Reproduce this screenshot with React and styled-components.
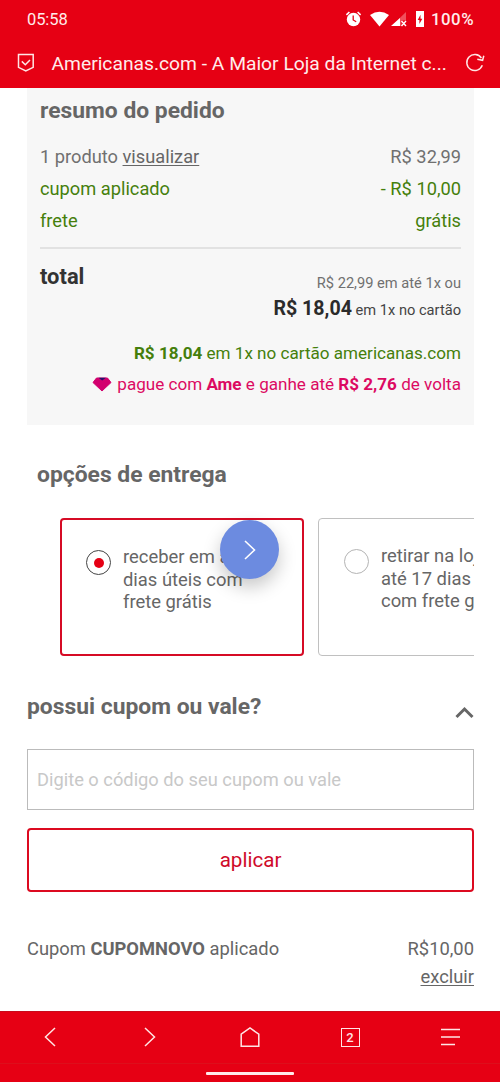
import React, { useState } from 'react';
import styled, { createGlobalStyle } from 'styled-components';

const GlobalStyle = createGlobalStyle`
  * {
    box-sizing: border-box;
  }

  body {
    margin: 0;
    background: #fff;
    color: #666;
    font-family: Roboto, 'Liberation Sans', sans-serif;
    font-size: 18.25px;
  }
`;

const Screen = styled.div`
  display: flex;
  flex-direction: column;
  width: 500px;
  height: 1082px;
  overflow: hidden;
`;

const Header = styled.header`
  flex: none;
  height: 88px;
  background: #e60014;
  color: #ffeceb;
`;

const StatusBar = styled.div`
  display: flex;
  align-items: center;
  justify-content: space-between;
  height: 38px;
  padding: 0 26px 0 27px;
  font-size: 16.5px;
`;

const Clock = styled.span`
  letter-spacing: -0.1px;
`;

const StatusIcons = styled.div`
  display: flex;
  align-items: center;
`;

const Battery = styled.span`
  margin-left: 6px;
  font-size: 16.8px;
  font-weight: 500;
  letter-spacing: 0.5px;
`;

const TitleBar = styled.div`
  display: flex;
  align-items: center;
  height: 50px;
  padding: 0 15px 0 17px;
`;

const PageTitle = styled.div`
  flex: 1;
  margin-left: 16.5px;
  font-size: 19.25px;
  white-space: nowrap;
`;

const Content = styled.main`
  flex: 1;
  padding: 0 26px 0 27px;
`;

const Summary = styled.section`
  height: 337px;
  padding: 7px 13px 0;
  background: #f7f7f7;
`;

const Heading = styled.h2`
  margin: 0;
  font-size: 22.85px;
  line-height: 32px;
  font-weight: 700;
`;

const SummaryRows = styled.div`
  margin-top: 14px;
  padding-bottom: 10px;
  border-bottom: 2px solid #e2e2e2;
`;

const SummaryRow = styled.div`
  display: flex;
  justify-content: space-between;
  line-height: 32px;
  color: ${(p) => (p.$discount ? '#457f0c' : '#707070')};
`;

const Underlined = styled.a`
  color: #666;
  text-decoration: underline;
  text-underline-offset: 2px;
  text-decoration-thickness: 1px;
`;

const TotalRow = styled.div`
  display: flex;
  justify-content: space-between;
  padding-top: 12px;
`;

const TotalLabel = styled.div`
  font-size: 21.9px;
  line-height: 32px;
  font-weight: 700;
  color: #333;
`;

const TotalValues = styled.div`
  padding-top: 10px;
  text-align: right;
`;

const FullPrice = styled.div`
  font-size: 14.65px;
  line-height: 25px;
  color: #707070;
`;

const CashPrice = styled.div`
  font-size: 14.65px;
  line-height: 26px;
  color: #444;

  strong {
    font-size: 19.6px;
    font-weight: 700;
    color: #2b2b2b;
  }
`;

const Offer = styled.div`
  display: flex;
  align-items: center;
  justify-content: flex-end;
  height: 31px;
  margin-top: ${(p) => p.$top || 0}px;
  font-size: 17.08px;
  white-space: pre;
  color: ${(p) => p.$color};

  strong {
    font-weight: 700;
  }

  svg {
    margin-right: 5px;
  }
`;

const Delivery = styled.section`
  padding-top: 34px;

  ${Heading} {
    padding-left: 10px;
  }
`;

const DeliveryTrack = styled.div`
  position: relative;
  display: flex;
  gap: 14px;
  margin-top: 27px;
  padding-left: 33px;
  overflow: hidden;
`;

const DeliveryCard = styled.label`
  display: flex;
  flex: none;
  align-items: flex-start;
  width: 244px;
  height: 138px;
  padding: ${(p) => (p.$selected ? '26px 0 0 24px' : '26px 0 0 25px')};
  border: ${(p) => (p.$selected ? '2px solid #d60b25' : '1px solid #c0c0c0')};
  border-radius: 4px;
`;

const Radio = styled.span`
  display: flex;
  flex: none;
  align-items: center;
  justify-content: center;
  width: 25px;
  height: 25px;
  margin-top: 4px;
  border: 1px solid ${(p) => (p.$selected ? '#444' : '#b4b4b4')};
  border-radius: 50%;

  &::after {
    content: '';
    width: 10px;
    height: 10px;
    border-radius: 50%;
    background: ${(p) => (p.$selected ? '#e60014' : 'transparent')};
  }
`;

const DeliveryText = styled.span`
  margin-left: 12px;
  font-size: 18.4px;
  line-height: 22.7px;
  white-space: pre;
`;

const FloatingNext = styled.button`
  position: absolute;
  top: 520px;
  left: 220px;
  display: flex;
  align-items: center;
  justify-content: center;
  width: 59px;
  height: 59px;
  padding: 0;
  border: none;
  border-radius: 50%;
  background: #6c8be0;
  box-shadow: 0 8px 18px rgba(0, 0, 0, 0.22);
`;

const CouponHeader = styled.div`
  display: flex;
  justify-content: space-between;
  margin-top: 35px;

  svg {
    margin-top: 14px;
  }
`;

const CouponInput = styled.input`
  display: block;
  width: 100%;
  height: 61px;
  margin-top: 26px;
  padding: 0 9px;
  border: 1px solid #bbb;
  border-radius: 0;
  outline: none;
  font: inherit;
  font-size: 18.3px;
  color: #666;

  &::placeholder {
    color: #c8c8c8;
    opacity: 1;
  }
`;

const ApplyButton = styled.button`
  display: block;
  width: 100%;
  height: 64px;
  margin-top: 18px;
  border: 2px solid #dc0a20;
  border-radius: 4px;
  background: #fff;
  color: #cf0a2a;
  font-family: inherit;
  font-size: 20.6px;
`;

const AppliedCoupon = styled.div`
  display: flex;
  justify-content: space-between;
  margin-top: 43px;
  font-size: 18.35px;
  line-height: 28px;

  strong {
    font-weight: 700;
  }
`;

const AppliedValue = styled.div`
  text-align: right;

  a {
    display: block;
  }
`;

const BottomBar = styled.footer`
  flex: none;
  height: 71px;
  background: #e60014;
  border-top: 1px solid #c80b1b;
`;

const NavRow = styled.nav`
  display: grid;
  grid-template-columns: repeat(5, 1fr);
  place-items: center;
  height: 52px;
  padding-bottom: 1px;
  border-bottom: 1px solid #dd0f1c;
`;

const TabCount = styled.span`
  display: flex;
  align-items: center;
  justify-content: center;
  width: 19px;
  height: 19px;
  border: 1.5px solid #ffe5e5;
  color: #ffe5e5;
  font-size: 13px;
  font-weight: 500;
`;

const HomeHandle = styled.div`
  width: 88px;
  height: 3px;
  margin: 8px auto 0;
  border-radius: 1px;
  background: #ffeaea;
`;

const Icon = ({ w, h, children, ...rest }) => (
  <svg width={w} height={h} viewBox={`0 0 ${w} ${h}`} fill="none" {...rest}>
    {children}
  </svg>
);

const line = { stroke: '#ffe5e5', strokeWidth: 1.5 };

const StatusIconSet = () => (
  <Icon w={80} h={20}>
    {/* alarm */}
    <circle cx="8.5" cy="10.5" r="6.7" fill="#fff" />
    <path d="M1.4 5.8 4.4 3M15.6 5.8 12.6 3" stroke="#fff" strokeWidth="1.6" />
    <path d="M8.2 6.6V11l3 1.8" stroke="#e60014" strokeWidth="1.3" />
    {/* wifi */}
    <path d="M25 6.1Q34.5-.5 44 6.1L34.5 17.6Z" fill="#fff" />
    {/* mobile signal without data */}
    <path d="M61 3v8.5h-4.5V17H46.5Z" fill="#f0505c" />
    <path d="M55 9v8h-9Z" fill="#fff" />
    <path d="m56.5 12 4.5 5M61 12l-4.5 5" stroke="#fff" strokeWidth="1.4" />
    {/* charging battery */}
    <path d="M71 2h8v16h-8Z" fill="#fff" />
    <path d="M75.5 5.8 72.7 11h1.7v4l2.9-5.200h-1.800Z" fill="#e60014" />
  </Icon>
);

const App = () => {
  const [coupon, setCoupon] = useState('');
  const [delivery, setDelivery] = useState('receber');

  return (
    <Screen>
      <GlobalStyle />
      <Header>
        <StatusBar>
          <Clock>05:58</Clock>
          <StatusIcons>
            <StatusIconSet />
            <Battery>100%</Battery>
          </StatusIcons>
        </StatusBar>
        <TitleBar>
          <Icon w={18} h={20}>
            <path d="M1.5 1.5h14.7v12.8L8.8 18 1.5 14.3Z" {...line} />
            <path d="m4.8 8.4 3.5 3.3 4.7-4.7" {...line} />
          </Icon>
          <PageTitle>Americanas.com - A Maior Loja da Internet c...</PageTitle>
          <Icon w={20} h={20}>
            <path d="M17.3 12.3a8 8 0 1 1-.9-7.3" {...line} />
            <path d="M18.8 2.8 17.6 7.3 12.3 6.2" {...line} />
          </Icon>
        </TitleBar>
      </Header>

      <Content>
        <Summary>
          <Heading>resumo do pedido</Heading>
          <SummaryRows>
            <SummaryRow>
              <span>1 produto <Underlined>visualizar</Underlined></span>
              <span>R$ 32,99</span>
            </SummaryRow>
            <SummaryRow $discount>
              <span>cupom aplicado</span>
              <span>- R$ 10,00</span>
            </SummaryRow>
            <SummaryRow $discount>
              <span>frete</span>
              <span>grátis</span>
            </SummaryRow>
          </SummaryRows>
          <TotalRow>
            <TotalLabel>total</TotalLabel>
            <TotalValues>
              <FullPrice>R$ 22,99 em até 1x ou</FullPrice>
              <CashPrice><strong>R$ 18,04</strong> em 1x no cartão</CashPrice>
            </TotalValues>
          </TotalRow>
          <Offer $color="#457f0c" $top={14}>
            <strong>R$ 18,04</strong> em 1x no cartão americanas.com
          </Offer>
          <Offer $color="#dc0a62">
            <Icon w={20} h={18}>
              <path d="M4.5 3h11L19 7.500l-9 8.500L1 7.500Z" fill="#d2006e" stroke="#d2006e" strokeLinejoin="round" />
              <path d="M6.5 2.700h7.500L10.200 5.500Z" fill="#25106b" />
            </Icon>
            pague com <strong>Ame</strong> e ganhe até <strong>R$ 2,76</strong> de volta
          </Offer>
        </Summary>

        <Delivery>
          <Heading>opções de entrega</Heading>
          <DeliveryTrack>
            <DeliveryCard $selected onClick={() => setDelivery('receber')}>
              <Radio $selected={delivery === 'receber'} />
              <DeliveryText>{'receber em até 9\ndias úteis com\nfrete grátis'}</DeliveryText>
            </DeliveryCard>
            <DeliveryCard onClick={() => setDelivery('retirar')}>
              <Radio $selected={delivery === 'retirar'} />
              <DeliveryText>{'retirar na loja em\naté 17 dias úteis\ncom frete grátis'}</DeliveryText>
            </DeliveryCard>
          </DeliveryTrack>
        </Delivery>

        <CouponHeader>
          <Heading>possui cupom ou vale?</Heading>
          <Icon w={19} h={14}>
            <path d="m1.5 12 8-8 8 8" stroke="#666" strokeWidth="3" />
          </Icon>
        </CouponHeader>
        <CouponInput
          placeholder="Digite o código do seu cupom ou vale"
          value={coupon}
          onChange={(e) => setCoupon(e.target.value)}
        />
        <ApplyButton>aplicar</ApplyButton>
        <AppliedCoupon>
          <span>Cupom <strong>CUPOMNOVO</strong> aplicado</span>
          <AppliedValue>
            R$10,00
            <Underlined>excluir</Underlined>
          </AppliedValue>
        </AppliedCoupon>
      </Content>

      <FloatingNext aria-label="avançar">
        <Icon w={14} h={22}>
          <path d="m2 2 9.5 9L2 20" stroke="#fff" strokeWidth="1.6" />
        </Icon>
      </FloatingNext>

      <BottomBar>
        <NavRow>
          <Icon w={12} h={20}>
            <path d="M11 1 1.5 10 11 19" {...line} />
          </Icon>
          <Icon w={12} h={20}>
            <path d="m1 1 9.5 9L1 19" {...line} />
          </Icon>
          <Icon w={20} h={20}>
            <path d="M1.2 7.2 10 1l8.8 6.2v12H1.2Z" {...line} />
          </Icon>
          <TabCount>2</TabCount>
          <Icon w={20} h={20}>
            <path d="M1 2.5h19M1 10h19M1 17.5h14" {...line} />
          </Icon>
        </NavRow>
        <HomeHandle />
      </BottomBar>
    </Screen>
  );
};

export default App;
